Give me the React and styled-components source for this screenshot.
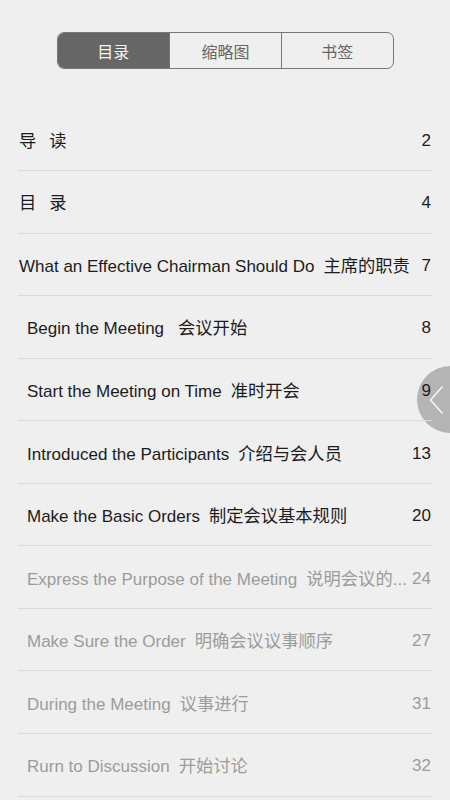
import React from "react";
import styled, { createGlobalStyle } from "styled-components";

const Global = createGlobalStyle`
  html, body { margin: 0; padding: 0; background: #efefef; }
  body { font-family: "Liberation Sans", "Noto Sans CJK SC", sans-serif; -webkit-font-smoothing: antialiased; }
`;

const Page = styled.div`
  position: relative;
  width: 450px;
  height: 800px;
  overflow: hidden;
  background: #efefef;
  display: flex;
  flex-direction: column;
`;

const Segments = styled.div`
  margin: 32px auto 0;
  width: 337px;
  height: 37px;
  box-sizing: border-box;
  display: grid;
  grid-template-columns: repeat(3, 1fr);
  border: 1.5px solid #777;
  border-radius: 7px;
  overflow: hidden;
`;

const Segment = styled.div`
  display: flex;
  align-items: center;
  justify-content: center;
  font-size: 16px;
  font-family: "Noto Sans CJK SC", sans-serif;
  color: ${p => (p.$active ? "#f4f4f4" : "#666")};
  background: ${p => (p.$active ? "#666" : "transparent")};
  & + & { border-left: 1.5px solid #777; }
`;

const List = styled.div`
  position: relative;
  z-index: 1;
  margin: 39.5px 18px 0;
  display: flex;
  flex-direction: column;
`;

const Row = styled.div`
  height: 62.55px;
  box-sizing: border-box;
  border-bottom: 1.5px solid #dadada;
  display: flex;
  align-items: center;
  line-height: 24px;
  padding-left: ${p => (p.$level === 2 ? 9 : 1)}px;
  padding-right: 1px;
  color: ${p => (p.$muted ? "#9c9c9c" : "#1c1c1c")};
  font-size: 17px;
`;

const Title = styled.div`
  flex: 1;
  min-width: 0;
  white-space: nowrap;
  padding-top: 3px;
`;

const Zh = styled.span`
  font-family: "Noto Sans CJK SC", sans-serif;
  font-size: 17.3px;
  margin-left: ${p => p.$gap}px;
  letter-spacing: ${p => (p.$spaced ? "13px" : "0")};
`;

const Dots = styled.span`
  font-family: "Liberation Sans", sans-serif;
  font-size: 17px;
`;

const Num = styled.div`
  margin-left: 6px;
  padding-top: 3px;
`;

const Tab = styled.div`
  position: absolute;
  z-index: 0;
  left: 417px;
  top: 366px;
  width: 67px;
  height: 67px;
  border-radius: 50%;
  background: #b4b4b4;
  display: flex;
  align-items: center;
  padding-left: 12px;
  box-sizing: border-box;
`;

const items = [
  { en: "", zh: "导读", n: 2, spaced: true },
  { en: "", zh: "目录", n: 4, spaced: true },
  { en: "What an Effective Chairman Should Do", zh: "主席的职责", n: 7 },
  { en: "Begin the Meeting", zh: "会议开始", n: 8, level: 2, gap: 14 },
  { en: "Start the Meeting on Time", zh: "准时开会", n: 9, level: 2 },
  { en: "Introduced the Participants", zh: "介绍与会人员", n: 13, level: 2 },
  { en: "Make the Basic Orders", zh: "制定会议基本规则", n: 20, level: 2 },
  { en: "Express the Purpose of the Meeting", zh: "说明会议的", dots: true, n: 24, level: 2, muted: true },
  { en: "Make Sure the Order", zh: "明确会议议事顺序", n: 27, level: 2, muted: true },
  { en: "During the Meeting", zh: "议事进行", n: 31, level: 2, muted: true },
  { en: "Rurn to Discussion", zh: "开始讨论", n: 32, level: 2, muted: true },
];

export default function App() {
  return (
    <Page>
      <Global />
      <Segments>
        <Segment $active>目录</Segment>
        <Segment>缩略图</Segment>
        <Segment>书签</Segment>
      </Segments>
      <List>
        {items.map((it, i) => (
          <Row key={i} $level={it.level} $muted={it.muted}>
            <Title>
              {it.en}
              <Zh $gap={it.en ? it.gap ?? 9 : 0} $spaced={it.spaced}>{it.zh}</Zh>
              {it.dots && <Dots>...</Dots>}
            </Title>
            <Num>{it.n}</Num>
          </Row>
        ))}
      </List>
      <Tab>
        <svg width="14" height="28" viewBox="0 0 14 28">
          <path d="M13 1 L1.5 14 L13 27" fill="none" stroke="#f6f6f6" strokeWidth="1.5" strokeLinecap="round" strokeLinejoin="round" />
        </svg>
      </Tab>
    </Page>
  );
}
